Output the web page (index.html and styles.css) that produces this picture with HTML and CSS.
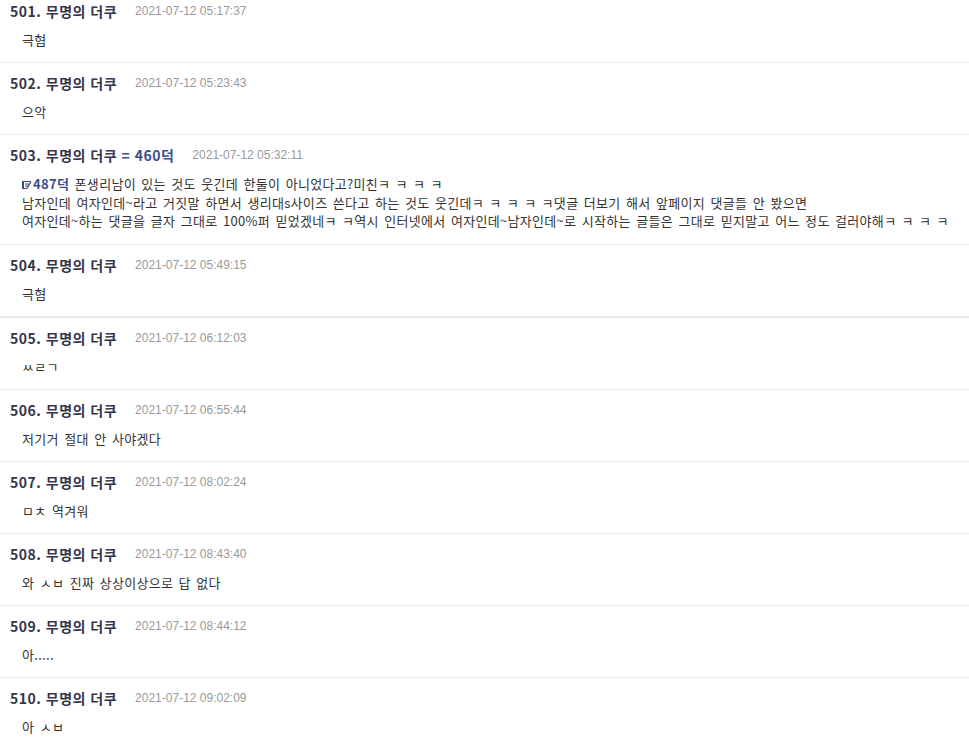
FILE: index.html
```html
<!DOCTYPE html>
<html lang="ko">
<head>
    <meta charset="UTF-8">
    <title>댓글</title>
    <link rel="stylesheet" href="styles.css">
</head>
<body>
    <ul class="comment-list">
        <li class="comment">
            <div class="comment-head"><span class="name">501. 무명의 더쿠</span><span class="date">2021-07-12 05:17:37</span></div>
            <div class="comment-body">극혐</div>
        </li>
        <li class="comment">
            <div class="comment-head"><span class="name">502. 무명의 더쿠</span><span class="date">2021-07-12 05:23:43</span></div>
            <div class="comment-body">으악</div>
        </li>
        <li class="comment">
            <div class="comment-head"><span class="name">503. 무명의 더쿠 <span class="ref">= 460덕</span></span><span class="date">2021-07-12 05:32:11</span></div>
            <div class="comment-body long"><span class="ref"><svg class="ref-icon" width="10" height="10" viewBox="0 0 10 10"><rect x="0" y="1" width="2" height="8" fill="#3d4c8c"/><path d="M2 1.5H9M3 4H7M3 6H6M2 8.5H5M9 1.5L5 8.5" stroke="#3d4c8c" stroke-width="1.2" fill="none"/></svg>487덕</span> 폰생리남이 있는 것도 웃긴데 한둘이 아니었다고?미친<span class="kk">ㅋㅋㅋ</span>ㅋ<br>남자인데 여자인데~라고 거짓말 하면서 생리대s사이즈 쓴다고 하는 것도 웃긴데<span class="kk">ㅋㅋㅋㅋ</span>ㅋ댓글 더보기 해서 앞페이지 댓글들 안 봤으면<br>여자인데~하는 댓글을 글자 그대로 100%퍼 믿었겠네<span class="kk">ㅋ</span>ㅋ역시 인터넷에서 여자인데~남자인데~로 시작하는 글들은 그대로 믿지말고 어느 정도 걸러야해<span class="kk">ㅋㅋㅋ</span>ㅋ</div>
        </li>
        <li class="comment page-end">
            <div class="comment-head"><span class="name">504. 무명의 더쿠</span><span class="date">2021-07-12 05:49:15</span></div>
            <div class="comment-body">극혐</div>
        </li>
        <li class="comment">
            <div class="comment-head"><span class="name">505. 무명의 더쿠</span><span class="date">2021-07-12 06:12:03</span></div>
            <div class="comment-body">ㅆㄹㄱ</div>
        </li>
        <li class="comment">
            <div class="comment-head"><span class="name">506. 무명의 더쿠</span><span class="date">2021-07-12 06:55:44</span></div>
            <div class="comment-body">저기거 절대 안 사야겠다</div>
        </li>
        <li class="comment">
            <div class="comment-head"><span class="name">507. 무명의 더쿠</span><span class="date">2021-07-12 08:02:24</span></div>
            <div class="comment-body">ㅁㅊ 역겨워</div>
        </li>
        <li class="comment">
            <div class="comment-head"><span class="name">508. 무명의 더쿠</span><span class="date">2021-07-12 08:43:40</span></div>
            <div class="comment-body">와 ㅅㅂ 진짜 상상이상으로 답 없다</div>
        </li>
        <li class="comment">
            <div class="comment-head"><span class="name">509. 무명의 더쿠</span><span class="date">2021-07-12 08:44:12</span></div>
            <div class="comment-body">아.....</div>
        </li>
        <li class="comment">
            <div class="comment-head"><span class="name">510. 무명의 더쿠</span><span class="date">2021-07-12 09:02:09</span></div>
            <div class="comment-body">아 ㅅㅂ</div>
        </li>
    </ul>
</body>
</html>
```

FILE: styles.css
```css
body {
    margin: 0;
    background: #fff;
    font-family: "Noto Sans CJK KR", "Noto Sans", sans-serif;
    color: #333;
}

.comment-list {
    list-style: none;
    margin: -8px 0 0;
    padding: 0;
}

.comment {
    padding: 10px 10px 13px;
    border-bottom: 1px solid #ebebeb;
}

.comment:first-child {
    padding-top: 9px;
}

.comment.page-end {
    border-bottom-width: 2px;
}

.comment-head {
    display: flex;
    align-items: center;
    gap: 18px;
    height: 20px;
    line-height: 20px;
    white-space: nowrap;
}

.name {
    font-size: 14px;
    font-weight: bold;
    letter-spacing: 0.5px;
    color: #35354a;
}

.name .ref {
    color: #3d4c8c;
}

.date {
    font-family: "Liberation Sans", Arial, sans-serif;
    font-size: 12px;
    color: #999;
}

.comment-body {
    margin-top: 10px;
    padding-left: 12px;
    font-size: 13px;
    line-height: 18px;
    letter-spacing: 0.3px;
    word-spacing: 1.5px;
    white-space: nowrap;
}

.comment-body.long {
    line-height: 18.5px;
}

.comment-body .ref {
    color: #3d4c8c;
    font-weight: bold;
}

.kk {
    letter-spacing: 5.5px;
}

.ref-icon {
    vertical-align: -1px;
    margin-right: 1px;
}
```
